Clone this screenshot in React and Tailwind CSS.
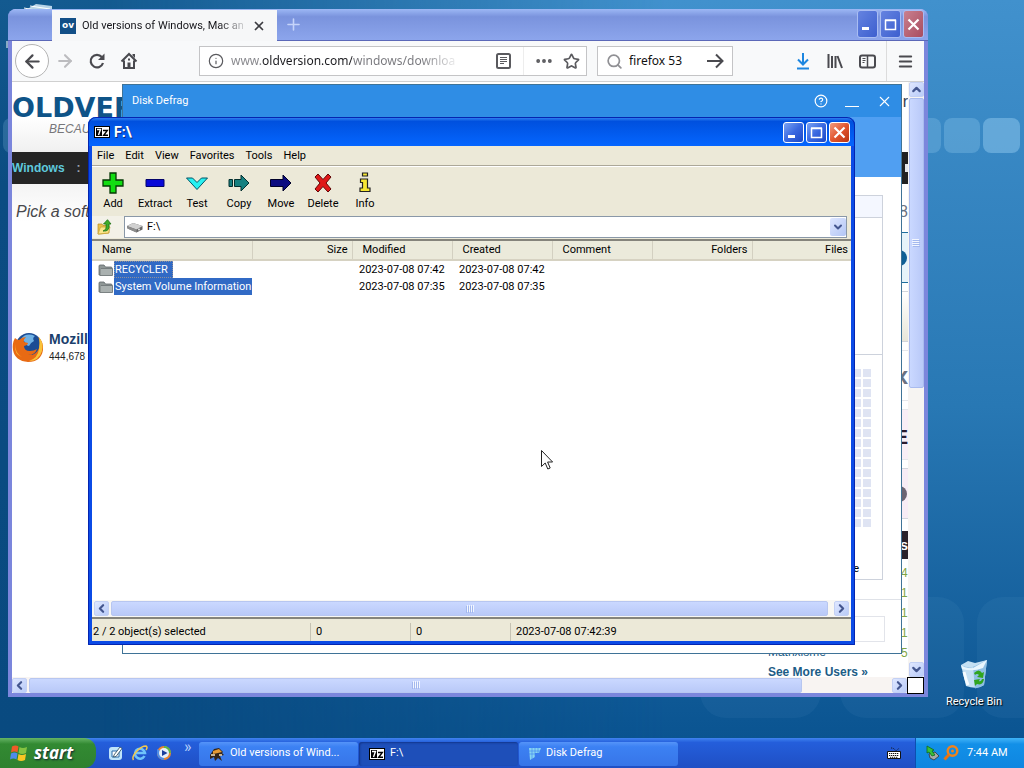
import React, { useState } from 'react';
import { ArrowLeft, ArrowRight, Star, Search, Menu, X, Plus, CircleHelp, Info, Ellipsis, ChevronLeft, ChevronRight, ChevronUp, ChevronDown } from 'lucide-react';

const files = [
  { name: 'RECYCLER', modified: '2023-07-08 07:42', created: '2023-07-08 07:42', focused: true },
  { name: 'System Volume Information', modified: '2023-07-08 07:35', created: '2023-07-08 07:35' },
];

const menus = ['File', 'Edit', 'View', 'Favorites', 'Tools', 'Help'];

// Background squares of the desktop wallpaper
const Wallpaper = () => (
  <>
    <div className="absolute inset-0 bg-linear-to-b from-[#135a90] via-[#0b4c82] via-25% to-[#094a80]" />
    <div className="absolute inset-0 bg-linear-to-b from-[#4191cd] via-[#2878b4] via-55% to-[#0a5491] mask-l-from-35% mask-l-to-90%" />
    <svg className="absolute right-0 bottom-0 h-[738px] w-[1024px]" viewBox="0 0 1024 738">
      <g fill="#9fd4f5">
        <rect x="905" y="118" width="36" height="35" rx="8" opacity=".25" />
        <rect x="944" y="118" width="36" height="35" rx="8" opacity=".28" />
        <rect x="983" y="118" width="37" height="35" rx="8" opacity=".42" />
        <rect x="3" y="118" width="36" height="35" rx="8" opacity=".2" />
        <rect x="700" y="597" width="121" height="121" rx="26" opacity=".06" />
        <rect x="840" y="597" width="124" height="121" rx="26" opacity=".06" />
        <rect x="977" y="597" width="124" height="121" rx="26" opacity=".06" />
      </g>
      <path d="M22 12 36 4 52 6V10H22z" fill="#b8d4e8" />
      <path d="M24 8 46 12M30 6 50 9" stroke="#fff" />
      <path d="M7 41v7" stroke="#fff" />
    </svg>
  </>
);

const SevenZipIcon = () => (
  <svg className="h-3 w-4 shrink-0" viewBox="0 0 16 12">
    <path d="M0 0h16v12H0z" fill="#000" />
    <path d="M1 1h14v10H1z" fill="#fff" />
    <path d="M2 2h6v8H2z" fill="#000" />
    <path d="M3 3.500h3.500L4.500 9" stroke="#fff" strokeWidth="1.400" fill="none" />
    <path d="M9 4.500h4.300L9.700 9.300H14" stroke="#000" strokeWidth="1.400" fill="none" />
  </svg>
);

const FolderIcon = () => (
  <svg className="h-[14px] w-4 shrink-0" viewBox="0 0 16 14">
    <path d="M1 3q0-1 1-1h4l1.500 2H13q1 0 1 1v7H1z" fill="#8f9796" stroke="#60686a" strokeWidth=".8" />
    <path d="M2 12.500V6.500L3 5.500h11.500v7z" fill="#aab1b0" stroke="#6c7475" strokeWidth=".8" />
  </svg>
);

const DriveIcon = () => (
  <svg className="h-4 w-4 shrink-0" viewBox="0 0 16 16">
    <path d="M0 7 6 4l9.500 3v3.500l-6 3-9-4z" fill="#666" />
    <path d="M0 7 6 4l9.500 3-6 3.500z" fill="#d0d0d0" />
    <path d="m0 7 9.500 3.500v3L.5 9.500z" fill="#8c8c8c" />
    <circle cx="12" cy="10.500" r=".9" fill="#eee" />
  </svg>
);

const UpFolderIcon = () => (
  <svg className="h-4 w-4" viewBox="0 0 16 16">
    <path d="M1 5h4l1 1.500h6V14l-9 1H1z" fill="#e9c14c" stroke="#b98d1d" strokeWidth=".7" />
    <path d="m1 15 2.500-7H13l-1.500 6z" fill="#fbe68b" stroke="#c9a030" strokeWidth=".7" />
    <path d="M6 12q4-1 3-7H6.500L10.500.700 14 5h-2q1 8-6 7z" fill="#3fae2a" stroke="#1c6e12" strokeWidth=".8" />
  </svg>
);

const FirefoxIcon = ({ className }) => (
  <svg className={className} viewBox="0 0 32 32">
    <circle cx="17" cy="15" r="13" fill="#1c4c94" />
    <path d="M9 8Q14 1 23 5q-3 2-1 5-4 2-5 5-4-1-4-4z" fill="#6fb1e4" />
    <path d="M3 7q2 2 4 2 3-3 7-3-3 3-2 5l4 1q0 2-4 3 0 5 6 5 4 0 7-2-2 6-9 6 8 1 11-7 2-6-1-11 6 5 5 13-2 12-15 12Q3 30 1 19 0 12 3 7z" fill="#e86a14" />
    <path d="M27 6q5 6 3 14-3 10-13 10 9-3 10-12 1-6 0-12z" fill="#f9c33a" />
    <path d="M3 13q0 9 7 13Q2 24 3 13z" fill="#fbab2c" />
  </svg>
);

const toolIcons = {
  Add: <path d="M8 1h6v7h7v6h-7v7H8v-7H1V8h7z" fill="#12dd12" stroke="#063806" strokeWidth="1.300" />,
  Extract: <path d="M2 7.500h18v7H2z" fill="#0808d8" stroke="#03036a" />,
  Test: <path d="M.5 6h6l4.500 4.500L15.500 6h6L11 17.500z" fill="#28f0f0" stroke="#056" />,
  Copy: (
    <g fill="#168080" stroke="#032f2f">
      <path d="M1 7.500h3.500v7H1z" />
      <path d="M6.500 7.500H13V3l8 8-8 8v-4.500H6.500z" />
    </g>
  ),
  Move: <path d="M.5 7.500H13V3l8 8-8 8v-4.500H.5z" fill="#0b0b80" stroke="#000028" />,
  Delete: <path d="m3 5 3-3 5 5.500L16 2l3 3-5 6 5 6-3 3-5-5.500L6 20l-3-3 5-6z" fill="#e01818" stroke="#620606" />,
  Info: (
    <g fill="#f6e634" stroke="#222" strokeWidth="1.200">
      <path d="M8.500 1h5v3h-5zM6.500 7h7v9H16v3.500H6V16h2.500v-5.500h-2z" />
    </g>
  ),
};

const ToolButton = ({ label }) => (
  <button className="flex w-[42px] flex-col items-center gap-px">
    <svg className="h-[22px] w-[22px]" viewBox="0 0 22 22">{toolIcons[label]}</svg>
    <span className="leading-[18px]">{label}</span>
  </button>
);

const arrows = { left: ChevronLeft, right: ChevronRight, up: ChevronUp, down: ChevronDown };

const ScrollButton = ({ dir }) => {
  const Icon = arrows[dir];
  return (
    <button
      aria-label={'Scroll ' + dir}
      className="flex h-[15px] w-[15px] shrink-0 items-center justify-center rounded-xs border border-[#c3d0f4] bg-linear-to-br from-[#dfe7ff] to-[#b9cbf8] text-[#44568f]"
    >
      <Icon size={13} strokeWidth={4} className="shrink-0" />
    </button>
  );
};

const Grip = ({ vertical }) => (
  <svg className={vertical ? 'h-2 w-2' : 'h-2 w-2 rotate-90'} viewBox="0 0 8 8">
    <path d="M0 .5h7M0 2.500h7M0 4.500h7M0 6.500h7" stroke="#f2f6ff" />
    <path d="M1 1.500h7M1 3.500h7M1 5.500h7M1 7.500h7" stroke="#a3b8ee" />
  </svg>
);

const WindowButton = ({ kind, faded }) => (
  <button
    aria-label={kind}
    className={
      (faded ? 'h-7 w-[21px] border-[#a9bdf3] ' : 'h-[21px] w-[21px] border-white ') +
      'flex items-center justify-center rounded-[3px] border ' +
      (kind === 'Close'
        ? faded ? 'bg-linear-to-br from-[#c9808f] to-[#a84c60]' : 'bg-linear-to-br from-[#f09a7c] via-[#e2562f] to-[#b93410]'
        : faded ? 'bg-linear-to-br from-[#6583e0] to-[#3d5fcf]' : 'bg-linear-to-br from-[#7ba2f3] via-[#3a68e0] to-[#1c48c6]')
    }
  >
    <svg className="h-[15px] w-[15px]" viewBox="0 0 15 15" stroke="#fff" fill="none">
      {kind === 'Minimize' && <path d="M2 11.500h7" strokeWidth="3" />}
      {kind === 'Maximize' && <path d="M2.500 3.500h10v9h-10zM2 3h11" strokeWidth="1.500" />}
      {kind === 'Close' && <path d="m2.500 2.500 10 10m0-10-10 10" strokeWidth="2.200" />}
    </svg>
  </button>
);

const WindowButtons = ({ faded }) => (
  <div className="flex gap-[2px]">
    <WindowButton kind="Minimize" faded={faded} />
    <WindowButton kind="Maximize" faded={faded} />
    <WindowButton kind="Close" faded={faded} />
  </div>
);

// Narrow strip of the site's right column
const SiteSidebar = () => (
  <div className="flex w-[7px] shrink-0 flex-col overflow-hidden font-['Liberation_Sans',sans-serif] text-gray-700">
    <div className="flex h-[70px] justify-end pt-3 text-base leading-4">r</div>
    <div className="flex h-8 shrink-0 items-center justify-end bg-[#222]"><span className="h-2 w-[3px] bg-gray-200" /></div>
    <div className="flex h-12 shrink-0 items-center justify-end pt-2 text-base text-gray-500">8</div>
    <div className="mb-2 flex h-[51px] shrink-0 items-center justify-end border-y border-[#1d6f9e] bg-[#e6f3fa]"><span className="mr-px h-4 w-4 shrink-0 rounded-full bg-[#0e5f95]" /></div>
    <div className="mb-2 h-[51px] shrink-0 border-y border-gray-300 bg-linear-to-b from-white to-[#e8e6da]" />
    <div className="mb-2 flex h-[51px] shrink-0 items-center justify-end border-y border-gray-200 text-2xl font-bold text-gray-500">x</div>
    <div className="mb-2 flex h-[51px] shrink-0 items-center justify-end border-y border-gray-200 bg-[#f8eef6] pt-1 text-xl font-bold text-[#2c1a2c]">E</div>
    <div className="mb-3 flex h-[51px] shrink-0 items-center justify-end border-y border-gray-300 bg-[#f7ecf5]"><span className="mr-px h-4 w-4 shrink-0 rounded-full bg-[#6c6472]" /></div>
    <div className="flex h-7 shrink-0 items-center justify-end bg-[#2a222b] text-sm font-bold text-white">s</div>
    <div className="flex flex-col items-start pt-1 text-[12px] leading-5 text-[#7fa544]">
      <span>4</span><span>1</span><span>1</span><span>1</span><span>5</span>
    </div>
  </div>
);

const toolbarIcon = 'flex h-8 w-8 items-center justify-center text-[#4a4a4f]';

const Browser = () => (
  <section aria-label="Old versions of Windows" className="absolute top-[9px] right-24 bottom-[41px] left-2 flex flex-col rounded-t-lg border-x-4 border-b-4 border-[#7b86dc] bg-white">
    <header className="-mx-1 flex h-8 shrink-0 rounded-t-lg border-b border-[#5b68b8] bg-linear-to-b from-[#9db8f5] via-[#7a93dd] via-25% to-[#8ca5ec] pl-11">
      <div className="mt-px flex h-[31px] w-[225px] items-center gap-[6px] bg-[#f6f7f8] px-2">
        <span className="flex h-4 w-4 shrink-0 items-center justify-center bg-[#124f87] font-['DejaVu_Sans',sans-serif] text-[9px] font-bold text-white">ov</span>
        <span className="min-w-0 flex-1 bg-linear-to-r from-[#15151a] from-85% to-[#15151a]/20 bg-clip-text text-[11px] leading-4 whitespace-nowrap text-transparent">Old versions of Windows, Mac and</span>
        <button aria-label="Close tab" className="flex w-5 justify-center text-[#3b3b40]"><X size={14} strokeWidth={3} /></button>
      </div>
      <button aria-label="New tab" className="flex w-8 items-center justify-center text-[#c5d4fa]"><Plus size={19} strokeWidth={2} /></button>
      <div className="mt-px mr-1 ml-auto"><WindowButtons faded /></div>
    </header>

    <div className="flex h-[41px] shrink-0 items-center border-b border-[#d0d0d0] bg-[#f8f9fa] pr-[3px] pl-[3px] font-['Noto_Sans',sans-serif]">
      <button aria-label="Back" className="flex h-[34px] w-[34px] items-center justify-center rounded-full border border-[#b4b4b4] bg-white text-[#4a4a4f]"><ArrowLeft size={21} strokeWidth={2.5} /></button>
      <button aria-label="Forward" className="flex h-8 w-8 items-center justify-center text-[#bcbcbf]"><ArrowRight size={20} strokeWidth={2.5} /></button>
      <button aria-label="Reload" className={toolbarIcon}>
        <svg className="h-[18px] w-[18px]" viewBox="0 0 18 18"><path d="M13.800 5A6.300 6.300 0 1 0 15 11" fill="none" stroke="currentColor" strokeWidth="2.200" /><path d="M16.500 1.500V8H10z" fill="currentColor" /></svg>
      </button>
      <button aria-label="Home" className={toolbarIcon}>
        <svg className="h-[18px] w-[18px]" viewBox="0 0 18 18"><path d="m1.500 9.500 7.500-7.500 7.500 7.500M4 8.500v7.500h10V8.500" fill="none" stroke="currentColor" strokeWidth="2" /><path d="M7.500 10.500h3V16h-3zM12.500 2H15v4l-2.500-2.500zM8 6.500h2v2H8z" fill="currentColor" /></svg>
      </button>

      <div className="ml-[54px] flex h-[30px] min-w-0 flex-1 items-center border border-[#c4c4c6] bg-white pl-2 text-[#5a5a5e]">
        <Info size={16} strokeWidth={1.8} className="shrink-0" />
        <input
          aria-label="Address"
          defaultValue="www.oldversion.com/windows/downloa"
          className="ml-[7px] w-[232px] min-w-0 bg-clip-text text-[12px] leading-5 text-transparent outline-none [background-image:linear-gradient(90deg,#85858a_31px,#1c1c20_31px,#1c1c20_121px,#77777c_121px,#77777c_190px,transparent_230px)]"
        />
        <button aria-label="Reader view" className="ml-auto flex h-7 w-10 shrink-0 items-center justify-center border-r border-[#ededed]">
          <svg className="h-4 w-[15px]" viewBox="0 0 15 16" fill="none" stroke="currentColor"><rect x="1" y="1" width="13" height="14" rx="1.500" strokeWidth="2" /><path d="M4 4.500h7M4 6.500h7M4 8.500h7M4 10.500h4" /></svg>
        </button>
        <button aria-label="Page actions" className="flex w-8 shrink-0 items-center justify-center pl-2"><Ellipsis size={20} strokeWidth={2.6} /></button>
        <button aria-label="Bookmark" className="flex w-[30px] shrink-0 items-center justify-center"><Star size={17} strokeWidth={2.4} /></button>
      </div>

      <div className="ml-[10px] flex h-[30px] w-[136px] items-center border border-[#c4c4c6] bg-white px-2 text-[#4a4a4f]">
        <Search size={17} strokeWidth={2.4} className="shrink-0 text-[#909094]" />
        <input aria-label="Search" defaultValue="firefox 53" className="ml-[6px] min-w-0 flex-1 text-[12px] leading-5 text-[#111] outline-none" />
        <button aria-label="Go">
          <svg className="h-4 w-[18px]" viewBox="0 0 18 16" fill="none" stroke="currentColor" strokeWidth="2"><path d="M1 8h15M10 1.500 16.500 8 10 14.500" /></svg>
        </button>
      </div>

      <div className="ml-[54px] flex items-center">
        <button aria-label="Downloads" className="flex h-8 w-8 items-center justify-center">
          <svg className="h-[18px] w-4" viewBox="0 0 16 18" fill="none" stroke="#1c86e0" strokeWidth="2"><path d="M8 1v11M3 7.500l5 5 5-5M2 16.500h12" /></svg>
        </button>
        <button aria-label="Library" className={toolbarIcon}>
          <svg className="h-4 w-4" viewBox="0 0 16 16" fill="none" stroke="currentColor" strokeWidth="2"><path d="M1.500 1v14M5 3v12M8.500 3v12M10.500 3l4.500 12" /></svg>
        </button>
        <button aria-label="Sidebars" className={toolbarIcon}>
          <svg className="h-[15px] w-[17px]" viewBox="0 0 17 15" fill="none" stroke="currentColor"><rect x="1" y="1.500" width="15" height="12" rx="2" strokeWidth="2" /><path d="M8.500 2v11" strokeWidth="1.500" /><path d="M3.500 4.500h3M3.500 6.500h3M3.500 8.500h2" /></svg>
        </button>
        <span className="ml-[3px] h-10 w-px bg-[#dcdcdc]" />
        <button aria-label="Menu" className="ml-[2px] flex h-8 w-8 items-center justify-center text-[#4a4a4f]"><Menu size={17} strokeWidth={2.8} /></button>
      </div>
    </div>

    <div className="flex min-h-0 flex-1">
      <main className="flex min-w-0 flex-1 overflow-hidden font-['Liberation_Sans',sans-serif]">
        <div className="flex min-w-0 flex-1 flex-col">
          <div className="h-[70px] shrink-0 bg-linear-to-b from-white from-50% to-[#f0f0f0] pt-3">
            <h1 className="font-['DejaVu_Sans',sans-serif] text-[27px] leading-7 font-bold text-[#0f5488]">OLDVER</h1>
            <p className="pl-[37px] text-[12px] leading-[14px] text-[#77777a] italic">BECAUSE</p>
          </div>
          <nav className="flex h-8 shrink-0 items-center gap-3 bg-[#252525] text-[12px] font-bold">
            <a href="#windows" className="text-[#5fc9dd]">Windows</a>
            <span className="text-gray-400">:</span>
          </nav>
          <p className="bg-linear-to-b from-[#f4f4f4] to-white pt-[18px] pl-1 text-base leading-5 text-[#48484c] italic">Pick a soft</p>
          <a href="#firefox" className="mt-[107px] flex h-9 items-center gap-[5px]">
            <FirefoxIcon className="h-8 w-8" />
            <span className="flex flex-col text-[10px] leading-4 text-[#222]">
              <b className="text-sm leading-5 text-[#1b3f6c]">Mozill</b>444,678
            </span>
          </a>
          <div className="mt-auto mr-[33px] flex flex-col gap-[10px] self-end text-[12px] leading-[10px] text-[#1c5c86]">
            <a href="#user">Matrixisme</a>
            <a href="#users" className="font-bold">See More Users »</a>
          </div>
        </div>
        <SiteSidebar />
      </main>
      <div className="flex w-4 shrink-0 flex-col items-center gap-px bg-[#f6f4f2]">
        <ScrollButton dir="up" />
        <div className="flex h-[290px] w-[15px] items-center justify-center rounded-xs border border-[#a9bbee] bg-linear-to-r from-[#cad8ff] to-[#b9c9f8]"><Grip vertical /></div>
        <span className="mt-auto"><ScrollButton dir="down" /></span>
      </div>
    </div>
    <div className="flex h-4 shrink-0 bg-[#f8f4f2]">
      <div className="flex min-w-0 flex-1 items-center gap-[2px]">
        <ScrollButton dir="left" />
        <div className="mr-[88px] flex h-[15px] flex-1 items-center justify-center rounded-xs border border-[#b7c6f0] bg-linear-to-b from-[#cad8ff] to-[#b9c9f8]"><Grip /></div>
        <ScrollButton dir="right" />
      </div>
      <span className="h-[17px] w-[17px] border border-black bg-white" />
    </div>
  </section>
);

const DiskDefrag = () => (
  <section aria-label="Disk Defrag" className="absolute top-[84px] right-[122px] bottom-[84px] left-[122px] flex flex-col border border-[#3f7397] bg-white">
    <header className="flex h-8 shrink-0 items-center bg-[#2f8de5] pr-2 pl-[9px] text-[11px] text-white">
      Disk Defrag
      <div className="ml-auto flex items-center gap-[17px]">
        <button aria-label="Help"><CircleHelp size={14} strokeWidth={2} /></button>
        <button aria-label="Minimize" className="flex h-3 w-[14px] items-end"><span className="h-px w-full bg-white" /></button>
        <button aria-label="Close"><X size={17} strokeWidth={1.5} /></button>
      </div>
    </header>
    <div className="h-[60px] shrink-0 bg-[#509ff2]" />
    <div className="mt-[18px] mr-[18px] flex h-[385px] flex-col border border-[#cdd2dc] text-[11px]">
      <div className="h-[22px] border-b border-[#cdd2dc] bg-[#f4f7ff]" />
      <div className="h-[137px] border-b border-[#cdd2dc]" />
      <div className="mt-[14px] mr-[11px] flex flex-col gap-[2px] self-end">
        {Array.from({ length: 16 }, (_, i) => (
          <div key={i} className="flex gap-[2px]">
            <span className="h-2 w-2 bg-[#dfe4f3]" />
            <span className="h-2 w-2 bg-[#dfe4f3]" />
          </div>
        ))}
      </div>
      <span className="mt-[34px] mr-[23px] self-end leading-4">e</span>
    </div>
    <div className="mt-[19px] flex justify-end border-t border-[#dfe2e8] pt-4 pr-4">
      <button aria-label="Stop" className="h-[26px] w-24 border border-[#e2e4ea]" />
    </div>
  </section>
);

const SevenZip = () => {
  const [path, setPath] = useState('F:\\');

  return (
    <section aria-label="F:\" className="absolute top-[117px] right-[169px] bottom-[93px] left-[88px] flex flex-col rounded-t-lg border-x-4 border-b-4 border-[#0b4be6] bg-[#ece9d8] text-[11px] text-black outline-1 -outline-offset-1 outline-[#0525b0]">
      <header className="-mx-1 flex h-[29px] shrink-0 items-center gap-1 rounded-t-lg bg-linear-to-b from-[#3a8af5] via-[#0050de] via-15% to-[#0566ff] pt-px pr-[5px] pl-[6px]">
        <SevenZipIcon />
        <h2 className="text-[14px] font-bold text-white text-shadow-[1px_1px_#0a2a80]">{path}</h2>
        <div className="ml-auto"><WindowButtons /></div>
      </header>

      <nav className="flex h-5 shrink-0 items-center gap-[11px] border-b border-[#aca899] px-[5px] pt-px">
        {menus.map((menu) => <button key={menu}>{menu}</button>)}
      </nav>

      <div className="flex h-[50px] shrink-0 items-start border-t border-white pt-[5px]">
        {Object.keys(toolIcons).map((label) => <ToolButton key={label} label={label} />)}
      </div>

      <div className="flex h-[22px] shrink-0 items-stretch">
        <button aria-label="Up one level" className="flex w-8 items-center bg-[#f3f1e8] pl-[5px]"><UpFolderIcon /></button>
        <label className="mr-1 flex min-w-0 flex-1 items-center gap-1 border border-[#8a98a8] bg-white pl-[2px]">
          <DriveIcon />
          <select aria-label="Path" value={path} onChange={(e) => setPath(e.target.value)} className="min-w-0 flex-1 appearance-none bg-white pt-px outline-none">
            <option>F:\</option>
          </select>
          <span className="flex h-[18px] w-4 items-center justify-center rounded-xs bg-linear-to-br from-[#dfe7ff] to-[#b3c6f5] text-[#44568f]"><ChevronDown size={12} strokeWidth={4} /></span>
        </label>
      </div>

      <div className="mt-px min-h-0 flex-1 overflow-hidden border-t-2 border-[#85847c] bg-white">
        <table className="w-full table-fixed border-collapse">
          <colgroup>
            <col className="w-40" /><col className="w-25" /><col className="w-25" /><col className="w-25" /><col className="w-25" /><col className="w-25" /><col />
          </colgroup>
          <thead>
            <tr className="h-[18px] border-b-2 border-[#d6d2c2] bg-[#ebeadb] text-left [&>th]:border-r [&>th]:border-[#d3d0c1] [&>th]:py-0 [&>th]:leading-[18px] [&>th]:font-normal [&>th:last-child]:border-r-0">
              <th className="px-[10px]">Name</th>
              <th className="px-1 text-right">Size</th>
              <th className="px-[10px]">Modified</th>
              <th className="px-[10px]">Created</th>
              <th className="px-[10px]">Comment</th>
              <th className="px-1 text-right">Folders</th>
              <th className="pr-[3px] text-right">Files</th>
            </tr>
          </thead>
          <tbody>
            {files.map((file) => (
              <tr key={file.name} className="h-[17px] [&>td]:py-0 [&>td]:leading-[17px] [&>td]:whitespace-nowrap">
                <td className="pl-[6px]">
                  <div className="flex items-center">
                    <FolderIcon />
                    <span className={file.focused ? 'bg-[#316ac5] pr-[5px] pl-px text-white outline-1 -outline-offset-1 outline-dotted outline-[#8f8f9a]' : 'flex-1 bg-[#316ac5] pl-px text-white'}>{file.name}</span>
                  </div>
                </td>
                <td />
                <td className="pl-[7px]">{file.modified}</td>
                <td className="pl-[7px]">{file.created}</td>
                <td /><td /><td />
              </tr>
            ))}
          </tbody>
        </table>
      </div>

      <div className="flex h-[17px] shrink-0 items-center gap-[2px] bg-[#f8f7f4] px-[2px]">
        <ScrollButton dir="left" />
        <div className="mr-1 flex h-[15px] flex-1 items-center justify-center rounded-xs border border-[#b7c6f0] bg-linear-to-b from-[#cad8ff] to-[#b9c9f8]"><Grip /></div>
        <ScrollButton dir="right" />
      </div>

      <footer className="flex h-6 shrink-0 items-center border-t-2 border-[#85847c] pt-1 [&>span]:border-l [&>span]:border-[#c5c2b3] [&>span]:pl-[5px] [&>span]:leading-[18px]">
        <p className="w-[218px] pl-px">2 / 2 object(s) selected</p>
        <span className="w-25">0</span>
        <span className="w-25">0</span>
        <span>2023-07-08 07:42:39</span>
      </footer>
    </section>
  );
};

const RecycleBin = () => (
  <button className="absolute right-[14px] bottom-[28px] flex w-18 flex-col items-center gap-1 text-[11px] leading-4 text-white text-shadow-[1px_1px_1px_#000]">
    <svg className="h-8 w-8" viewBox="0 0 32 32">
      <path d="M3 7 10 3l7 2 12-3-3 25q-7 5-18 1z" fill="#c4e0f3" />
      <path d="M3 7q8 4 14 1l12-6-3 25q-4 3-9 3.500L15 9Q8 11 3 7z" fill="#8fbfe4" />
      <path d="M3 7q5 4 12 3L29 2l-4 8q-10 4-21 1z" fill="#e9f6fd" />
      <path d="M6 14q2 8 4 13" stroke="#f6fcff" strokeWidth="3" fill="none" />
      <path d="M16 15q5-5 8 0l2-1-1 6-6-1 2-2q-2-2-4 0zM26 21q-1 7-7 5l-2 2-1-6 6-1-1 2q2 1 3-2z" fill="#30a51e" />
    </svg>
    Recycle Bin
  </button>
);

const taskStyle = 'flex h-6 min-w-0 flex-1 max-w-[159px] items-center gap-[5px] rounded-[3px] px-[10px] whitespace-nowrap ';

const Taskbar = () => (
  <footer className="flex h-[30px] shrink-0 items-stretch bg-linear-to-b from-[#4083f0] via-[#245edb] via-15% to-[#1f4fc4] text-[11px] text-white">
    <button className="flex w-24 items-center gap-[6px] rounded-r-xl bg-linear-to-b from-[#65b565] via-[#328a32] via-20% to-[#2f812f] pl-[10px] font-['Open_Sans',sans-serif] text-[17px] font-bold italic text-shadow-[1px_1px_2px_#123]">
      <svg className="h-[18px] w-[18px]" viewBox="0 0 18 18">
        <path d="M2 2.500q3.500-2 6.500 0L7.500 8.500q-3-2-6.500 0z" fill="#ef5a28" />
        <path d="M9.500 3q3 2 7.500 0l-1 6q-4 2-7.500 0z" fill="#84c341" />
        <path d="M1 9.500q3.500-2 6.500 0l-1 6q-3-2-6.500 0z" fill="#4f8bea" />
        <path d="M8.500 10q3 2 7.500 0l-1 6q-4 2-7.500 0z" fill="#f9c623" />
      </svg>
      start
    </button>

    <div className="flex items-center gap-2 pl-3">
      <button aria-label="Show desktop">
        <svg className="h-4 w-4" viewBox="0 0 16 16"><rect x="1" y="2" width="13" height="13" rx="3" fill="#bfe4fa" /><path d="M4 6h7v6H4z" fill="#fff" stroke="#2a6ba8" /><path d="m6 10 6-8 2 1.500-6 8-2.500.500z" fill="#fff" stroke="#245" strokeWidth=".8" /></svg>
      </button>
      <button aria-label="Internet Explorer">
        <svg className="h-4 w-4" viewBox="0 0 16 16" fill="none"><path d="M12.500 11A5 5 0 1 1 13 8H4" stroke="#6fc3fa" strokeWidth="2.500" /><path d="M1.500 15q-2-3 3-8.500T14 1q2 1 0 4" stroke="#f5c84a" strokeWidth="1.500" /></svg>
      </button>
      <button aria-label="Media Player">
        <svg className="h-4 w-4" viewBox="0 0 16 16"><circle cx="8" cy="8" r="7" fill="#e88734" /><path d="M8 1a7 7 0 0 1 7 7H8z" fill="#58b947" /><path d="M8 15a7 7 0 0 1-7-7V4l7 4z" fill="#4f8ee8" /><circle cx="8" cy="8" r="5" fill="#e8f0fa" /><path d="m6 5 5.500 3L6 11z" fill="#1d3f9c" /></svg>
      </button>
      <span className="-mt-3 w-4 pl-1 text-[16px] leading-4 text-[#b7d2fb]">»</span>
    </div>

    <div className="flex min-w-0 flex-1 items-center gap-px pt-px pl-[3px]">
      <button className={taskStyle + 'bg-linear-to-b from-[#5594f9] via-[#3c81f3] via-20% to-[#3775e8]'}>
        <svg className="h-4 w-4 shrink-0" viewBox="0 0 16 16"><path d="M1 9 5 3l5-1 4 4-1 1 2 2-4 1 2 5-4-3-3 3-1-4-4 2z" fill="#33251b" /><path d="m4 5 6-2 3 3-4 1-5 1z" fill="#e49a35" /><path d="M2 9h4M10 9h3" stroke="#f7e4c0" strokeWidth="1.500" /></svg>
        <span>Old versions of Wind...</span>
      </button>
      <button className={taskStyle + 'bg-[#1e4fb9] shadow-[inset_1px_1px_2px_#12358c]'}>
        <SevenZipIcon />
        <span>F:\</span>
      </button>
      <button className={taskStyle + 'bg-linear-to-b from-[#5594f9] via-[#3c81f3] via-20% to-[#3775e8]'}>
        <svg className="h-3 w-3 shrink-0" viewBox="0 0 12 12"><path d="M0 0h12L10 5H6v4l-5 3z" fill="#87d4f2" /><path d="M0 3h12M0 6h10M3 0v12M6 0v10M9 0v6" stroke="#3c81f3" strokeWidth=".6" /></svg>
        <span>Disk Defrag</span>
      </button>
    </div>

    <button aria-label="Keyboard" className="flex w-7 items-center">
      <svg className="h-3 w-[14px]" viewBox="0 0 14 12"><path d="M4 1q3 0 4 2t4-2" stroke="#111" strokeDasharray="1 1" fill="none" /><path d="M.5 4.500h13v7H.5z" fill="#fff" stroke="#111" /><path d="M2 6.500h10M2 8.500h10M3 10.300h8" stroke="#111" strokeWidth="1" strokeDasharray="1.300 .7" /></svg>
    </button>
    <div className="flex w-[109px] items-center gap-[3px] border-l border-[#0c4fb0] bg-linear-to-b from-[#3eb4f8] via-[#1290e8] via-20% to-[#0f86e0] pl-2">
      <svg className="h-4 w-4" viewBox="0 0 16 16"><path d="m5 9 6-2 4 4-5 4-4-2z" fill="#a8aaa8" stroke="#333" strokeWidth=".8" /><path d="M3 1 10 5 8 6l3 4-3 1-3-4-2 1z" fill="#36c13a" stroke="#116a18" strokeWidth=".8" /></svg>
      <svg className="h-4 w-4" viewBox="0 0 16 16" fill="none"><circle cx="9.500" cy="6" r="4.800" stroke="#f0831c" strokeWidth="2.400" /><path d="M6 9.500 1.500 14.500" stroke="#e67413" strokeWidth="3" /><circle cx="9.500" cy="6" r="1.500" fill="#f0831c" /></svg>
      <time className="pl-[5px]">7:44 AM</time>
    </div>
  </footer>
);

const App = () => (
  <div className="flex h-screen flex-col overflow-hidden font-[Roboto,sans-serif]">
    <div className="relative min-h-0 flex-1 overflow-hidden">
      <Wallpaper />
      <RecycleBin />
      <Browser />
      <DiskDefrag />
      <SevenZip />
      <svg className="pointer-events-none absolute top-[450px] left-[541px] h-5 w-3" viewBox="0 0 12 20">
        <path d="M.5.500v16l3.700-3.500 2.600 6 2.400-1-2.600-6h5z" fill="#fff" stroke="#222" />
      </svg>
    </div>
    <Taskbar />
  </div>
);

export default App;
